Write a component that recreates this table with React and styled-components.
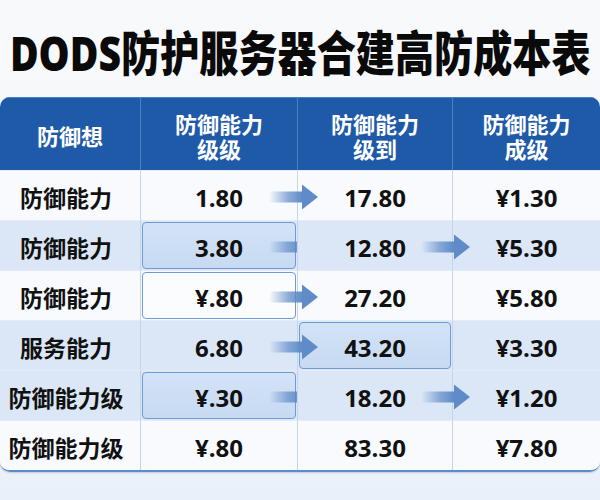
import React from "react";
import styled, { createGlobalStyle } from "styled-components";

const Global = createGlobalStyle`
  html, body { margin: 0; padding: 0; }
  body {
    width: 600px;
    height: 500px;
    overflow: hidden;
    background: linear-gradient(180deg, #f8f9fb 0%, #f4f7fb 60%, #e9f0f9 100%);
    font-family: "Open Sans", "Noto Sans CJK SC", sans-serif;
  }
`;

const Page = styled.div`
  width: 600px;
  height: 500px;
  display: flex;
  flex-direction: column;
`;

const TitleBar = styled.div`
  height: 97px;
  display: flex;
  align-items: center;
  justify-content: center;
  padding-top: 8px;
  box-sizing: border-box;
  overflow: visible;
`;

const Title = styled.h1`
  margin: 0;
  display: inline-block;
  white-space: nowrap;
  font-family: "Open Sans", "Noto Sans CJK SC", sans-serif;
  font-size: 48px;
  font-weight: 800;
  color: #0a0a0a;
  letter-spacing: 0;
  transform: scaleX(0.815);
  transform-origin: center;
  line-height: 1;
`;

const Table = styled.div`
  display: grid;
  grid-template-columns: 140px 157px 155px 148px;
  grid-template-rows: 73px repeat(6, 50px);
  border-radius: 10px;
  overflow: hidden;
  border-bottom: 2px solid #5d8ccb;
  box-shadow: 0 1px 2px rgba(60, 100, 160, 0.25);
`;

const HeadCell = styled.div`
  background: #1f5aa9;
  color: #ffffff;
  font-family: "Noto Sans CJK SC", sans-serif;
  font-weight: 700;
  font-size: 22px;
  line-height: 25px;
  display: flex;
  align-items: center;
  justify-content: center;
  text-align: center;
  white-space: pre-line;
  border-left: ${(p) => (p.$first ? "none" : "1px solid #4d7fc2")};
  border-top: 1px solid #4a7fc6;
  padding-top: 3px;
  box-sizing: border-box;
`;

const Cell = styled.div`
  position: relative;
  display: flex;
  align-items: center;
  justify-content: center;
  box-sizing: border-box;
  background: ${(p) => (p.$alt ? "#dbe7f6" : "#f8fafd")};
  border-left: ${(p) => (p.$first ? "none" : "1px solid #c3d4ec")};
  border-top: 1px solid #e3ebf6;
  padding-top: 3px;
  color: #111;
  font-family: ${(p) =>
    p.$label ? `"Noto Sans CJK SC", sans-serif` : `"Open Sans", "Noto Sans CJK SC", sans-serif`};
  font-weight: 700;
  font-size: ${(p) => (p.$label ? "23px" : "24px")};
  padding-right: ${(p) => (p.$label ? "8px" : "0")};
  z-index: ${(p) => (p.$arrow ? 2 : 1)};
`;

const Box = styled.div`
  position: absolute;
  inset: 1px 1px 1px 1px;
  border: 1.5px solid #6f9ad3;
  border-radius: 4px;
  background: ${(p) => (p.$fill ? "linear-gradient(180deg,#d3e3f7 0%, #c7daf2 100%)" : "#fbfcfe")};
  z-index: 0;
`;

const CellText = styled.span`
  position: relative;
  z-index: 1;
`;

const ArrowWrap = styled.svg`
  position: absolute;
  top: 50%;
  right: ${(p) => p.$right}px;
  transform: translateY(-50%);
  margin-top: 1px;
  z-index: 3;
`;

function Arrow({ right, id }) {
  return (
    <ArrowWrap $right={right} width="50" height="26" viewBox="0 0 50 26">
      <defs>
        <linearGradient id={id} x1="0" x2="1" y1="0" y2="0">
          <stop offset="0" stopColor="#5e8bc8" stopOpacity="0" />
          <stop offset="0.55" stopColor="#5e8bc8" stopOpacity="0.7" />
          <stop offset="1" stopColor="#5b88c6" stopOpacity="1" />
        </linearGradient>
      </defs>
      <rect x="0" y="7.5" width="35" height="11" fill={`url(#${id})`} />
      <polygon points="33,0.5 49,13 33,25.5" fill="#5f8cc8" />
    </ArrowWrap>
  );
}

const rows = [
  { label: "防御能力", a: "1.80", b: "17.80", c: "¥1.30", alt: false, arrowAB: true },
  { label: "防御能力", a: "3.80", b: "12.80", c: "¥5.30", alt: true, arrowAB: true, arrowBC: true, boxA: "fill" },
  { label: "防御能力", a: "¥.80", b: "27.20", c: "¥5.80", alt: false, arrowAB: true, boxA: "plain" },
  { label: "服务能力", a: "6.80", b: "43.20", c: "¥3.30", alt: true, arrowAB: true, boxB: "fill" },
  { label: "防御能力级", a: "¥.30", b: "18.20", c: "¥1.20", alt: true, arrowAB: true, arrowBC: true, boxA: "fill" },
  { label: "防御能力级", a: "¥.80", b: "83.30", c: "¥7.80", alt: false },
];

const headers = ["防御想", "防御能力\n级级", "防御能力\n级到", "防御能力\n成级"];

export default function App() {
  return (
    <>
      <Global />
      <Page>
        <TitleBar>
          <Title>DODS防护服务器合建高防成本表</Title>
        </TitleBar>
        <Table>
          {headers.map((h, i) => (
            <HeadCell key={h} $first={i === 0}>
              {h}
            </HeadCell>
          ))}
          {rows.map((r, i) => (
            <React.Fragment key={i}>
              <Cell $first $label $alt={r.alt}>
                <CellText>{r.label}</CellText>
              </Cell>
              <Cell $alt={r.alt} $arrow={r.arrowAB}>
                {r.boxA && <Box $fill={r.boxA === "fill"} />}
                <CellText>{r.a}</CellText>
                {r.arrowAB && <Arrow right={-22} id={`ab${i}`} />}
              </Cell>
              <Cell $alt={r.alt} $arrow={r.arrowBC}>
                {r.boxB && <Box $fill={r.boxB === "fill"} />}
                <CellText>{r.b}</CellText>
                {r.arrowBC && <Arrow right={-19} id={`bc${i}`} />}
              </Cell>
              <Cell $alt={r.alt}>
                <CellText>{r.c}</CellText>
              </Cell>
            </React.Fragment>
          ))}
        </Table>
      </Page>
    </>
  );
}
